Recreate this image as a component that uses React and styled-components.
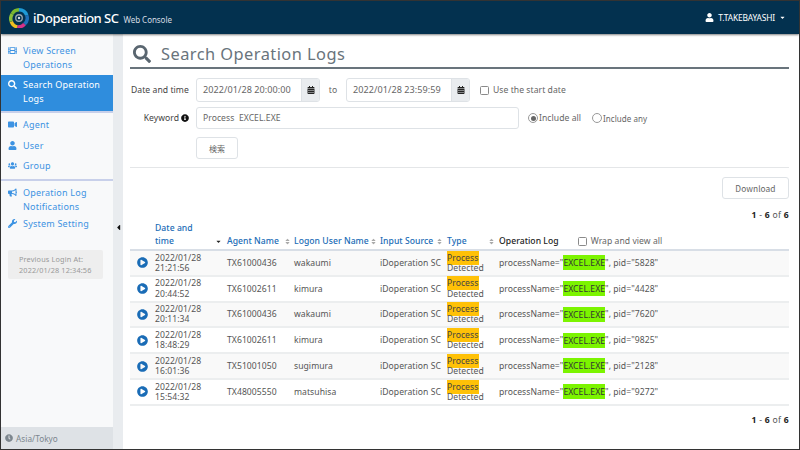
import React from "react";
import styled, { createGlobalStyle } from "styled-components";
import { FaFilm, FaSearch, FaVideo, FaUser, FaUsers, FaBullhorn, FaWrench, FaClock, FaCalendarAlt, FaInfoCircle, FaPlayCircle, FaCaretDown, FaCaretLeft, FaSort } from "react-icons/fa";

const Global = createGlobalStyle`
  html, body { margin: 0; padding: 0; background: #fff; }
  * { box-sizing: border-box; }
  body { font-family: "Noto Sans", "Noto Sans CJK JP", sans-serif; font-size: 8.6px; color: #555; letter-spacing: .05px; }
`;
const Frame = styled.div`
  width: 800px; height: 450px; border: 1px solid #333; display: flex; flex-direction: column; overflow: hidden;
`;
const Header = styled.header`
  height: 33px; flex: none; background: #03314f; color: #fff; display: flex; align-items: center; padding: 0 8px; box-shadow: 0 1px 2px rgba(0,0,0,.5); position: relative; z-index: 2;
`;
const Brand = styled.div`font-size: 13px; font-weight: 500; margin-left: 4px; letter-spacing: -.5px;`;
const Sub = styled.span`font-size: 8px; font-weight: 400; margin-left: 5px; color: #d5dde3; letter-spacing: -.05px;`;
const UserMenu = styled.div`margin-left: auto; margin-right: 5px; display: flex; align-items: center; gap: 4px; font-size: 8.4px; letter-spacing: -.15px; svg { display: block; }`;
const Body = styled.div`flex: 1; display: flex; min-height: 0;`;
const Side = styled.nav`width: 112px; flex: none; background: #f8f9fa; display: flex; flex-direction: column; padding-top: 10px;`;
const Item = styled.div`
  display: flex; gap: 6px; color: ${p => p.$active ? "#fff" : "#3d93e2"}; background: ${p => p.$active ? "#2f8ddd" : "transparent"};
  padding: ${p => p.$active ? "3px 0 5px 7px" : "0 0 0 7px"}; line-height: 13.7px; font-size: 9px; letter-spacing: .22px; white-space: nowrap; margin-bottom: ${p => p.$mb || 0}px;
  svg { flex: none; margin-top: 2px; width: 9px; height: 9px; }
`;
const Rule = styled.div`height: 2px; background: #c8d0ea; margin-bottom: ${p => p.$mb}px;`;
const LoginBox = styled.div`margin: 19px 10px 0 7px; background: #eeeeee; color: #999; border-radius: 2px; padding: 4px 0 0 11px; line-height: 10.5px; font-size: 7.3px; letter-spacing: .15px; height: 29px; white-space: nowrap;`;
const Zone = styled.div`margin-top: auto; height: 22px; background: #dee2e6; color: #7c868e; display: flex; align-items: center; gap: 3px; padding-left: 4px; font-size: 8.2px; svg { width: 8px; height: 8px; }`;
const Gutter = styled.div`width: 10px; flex: none; background: #e9ecef; display: flex; align-items: center; justify-content: center; padding-bottom: 28px; svg { width: 5px; height: 9px; color: #111; }`;
const Main = styled.main`flex: 1; padding: 0 10px 0 7px; min-width: 0; background: #fff;`;
const Title = styled.h1`
  margin: 9px 0 0; height: 26px; border-bottom: 2px solid #69747c; color: #69747c; font-size: 16.4px; font-weight: 400; line-height: 22px; display: flex; gap: 10px; padding-left: 3px; letter-spacing: .45px;
  svg { width: 18px; height: 18px; margin-top: 2px; color: #5a6670; }
`;
const FormRow = styled.div`display: flex; align-items: center; height: ${p => p.$h}px; margin-top: ${p => p.$mt}px;`;
const Label = styled.div`width: 66px; flex: none; padding-left: 1px; padding-right: ${p => p.$right ? 7 : 0}px; color: #444; display: flex; justify-content: ${p => p.$right ? "flex-end" : "flex-start"}; align-items: center; gap: 2px; svg { width: 8px; height: 8px; color: #111; }`;
const Group = styled.div`width: 124px; height: 24px; display: flex; border: 1px solid #dee2e6; border-radius: 3px; overflow: hidden;`;
const GroupText = styled.div`flex: 1; padding-left: 6px; line-height: 21px; color: #666; font-size: 9.1px;`;
const Addon = styled.div`width: 18px; background: #e9ecef; border-left: 1px solid #dee2e6; display: flex; align-items: center; justify-content: center; svg { width: 8px; height: 8px; color: #222; }`;
const To = styled.div`width: 26px; text-align: center; color: #666;`;
const Check = styled.span`width: 9px; height: 9px; border: 1px solid #8a8a8a; border-radius: 1.5px; display: inline-block; flex: none;`;
const CheckLabel = styled.div`display: flex; align-items: center; gap: 4px; margin-left: ${p => p.$ml}px; color: #666;`;
const TextInput = styled.div`width: 323px; height: 22px; border: 1px solid #dee2e6; border-radius: 3px; line-height: 20px; padding-left: 6px; color: #666; white-space: pre;`;
const Radio = styled.span`width: 10px; height: 10px; border: 1px solid #999; border-radius: 50%; display: flex; align-items: center; justify-content: center; flex: none; &::after { content: ""; width: 5px; height: 5px; border-radius: 50%; background: ${p => p.$on ? "#666" : "transparent"}; }`;
const RadioLabel = styled.div`display: flex; align-items: center; gap: 1px; margin-left: ${p => p.$ml}px; color: #666; font-size: ${p => p.$fs || 8.6}px;`;
const Btn = styled.div`height: 22px; width: ${p => p.$w}px; border: 1px solid #dee2e6; border-radius: 3px; display: flex; align-items: center; justify-content: center; color: #666; margin-left: ${p => p.$ml || 0}px; font-size: ${p => p.$fs || 8.4}px; font-family: "Noto Sans CJK JP", sans-serif;`;
const Hr = styled.div`height: 1px; background: #e4e6e8; margin-top: 8px;`;
const Tools = styled.div`display: flex; justify-content: flex-end; margin-top: 9px;`;
const Count = styled.div`text-align: right; margin-top: ${p => p.$mt}px; color: #555; font-size: 8.6px; line-height: 12px; letter-spacing: .3px; b { color: #222; font-weight: 700; }`;
const Table = styled.table`width: 659px; table-layout: fixed; border-collapse: collapse; margin-top: -2px;`;
const Th = styled.th`
  width: ${p => p.$w}px; height: 31px; padding: 0 0 1px; font-weight: 500; text-align: left; vertical-align: bottom; font-size: 8.6px; line-height: 13px; color: ${p => p.$dark ? "#222" : "#1a6cb6"}; border-bottom: 2px solid #d8dee6; white-space: nowrap;
`;
const ThInner = styled.div`display: flex; align-items: flex-end; justify-content: space-between; padding-right: ${p => p.$pr || 0}px; svg { width: 7px; height: 7px; margin: 0 0 3px; color: ${p => p.$sorted ? "#222" : "#aaa"}; flex: none; }`;
const Wrap = styled.span`display: inline-flex; align-items: center; gap: 4px; margin-left: 19px; font-weight: 400; color: #666; vertical-align: bottom;`;
const Tr = styled.tr`background: ${p => p.$odd ? "#f9f9f9" : "#fff"};`;
const Td = styled.td`height: 25.8px; padding: 0; border-bottom: 2px solid #eceeef; line-height: 10.2px; color: #555; vertical-align: middle; white-space: nowrap;`;
const Play = styled(FaPlayCircle)`width: 11px; height: 11px; color: #1a6cb6; display: block; margin: 0 0 0 7px;`;
const Amber = styled.mark`background: #ffc107; color: #444; padding: 1px 1px 1px 0;`;
const Lime = styled.mark`background: #7cf400; color: #333; padding: 1.5px 0;`;
const Logo = styled.svg`width: 20px; height: 20px; flex: none; display: block;`;

const rows = [
  ["21:21:56", "TX61000436", "wakaumi", "5828"],
  ["20:44:52", "TX61002611", "kimura", "4428"],
  ["20:11:34", "TX61000436", "wakaumi", "7620"],
  ["18:48:29", "TX61002611", "kimura", "9825"],
  ["16:01:36", "TX51001050", "sugimura", "2128"],
  ["15:54:32", "TX48005550", "matsuhisa", "9272"],
];

export default function App() {
  return (
    <>
      <Global />
      <Frame>
        <Header>
          <Logo viewBox="0 0 22 22" fill="none" strokeWidth="3.8">
            <path d="M3.5 6.5A9 9 0 0 1 11 2" stroke="#7ab82e" />
            <path d="M11 2a9 9 0 0 1 8.5 6" stroke="#1e9ad6" />
            <path d="M19.5 8a9 9 0 0 1 -2.5 9.7" stroke="#1e6fb8" />
            <path d="M17 17.7a9 9 0 0 1 -8 3.1" stroke="#d6328a" />
            <path d="M9 20.8a9 9 0 0 1 -6.5 -6" stroke="#f0c020" />
            <path d="M2.5 14.8a9 9 0 0 1 1 -8.3" stroke="#8ac03a" />
            <circle cx="11" cy="11" r="3.6" stroke="#9aa5ad" strokeWidth="1.5" />
            <circle cx="11" cy="11" r="1.3" fill="#dfe4e8" stroke="none" />
          </Logo>
          <Brand>iDoperation SC<Sub>Web Console</Sub></Brand>
          <UserMenu><FaUser size={9} />T.TAKEBAYASHI<FaCaretDown size={7} /></UserMenu>
        </Header>
        <Body>
          <Side>
            <Item $mb={4}><FaFilm />View Screen<br />Operations</Item>
            <Item $active><FaSearch /><span>Search Operation<br />Logs</span></Item>
            <Rule $mb={5} />
            <Item $mb={7}><FaVideo />Agent</Item>
            <Item $mb={7}><FaUser />User</Item>
            <Item $mb={6}><FaUsers />Group</Item>
            <Rule $mb={5} />
            <Item $mb={4}><FaBullhorn /><span>Operation Log<br />Notifications</span></Item>
            <Item><FaWrench />System Setting</Item>
            <LoginBox>Previous Login At:<br />2022/01/28 12:34:56</LoginBox>
            <Zone><FaClock />Asia/Tokyo</Zone>
          </Side>
          <Gutter><FaCaretLeft /></Gutter>
          <Main>
            <Title><FaSearch />Search Operation Logs</Title>
            <FormRow $h={24} $mt={9}>
              <Label>Date and time</Label>
              <Group><GroupText>2022/01/28 20:00:00</GroupText><Addon><FaCalendarAlt /></Addon></Group>
              <To>to</To>
              <Group><GroupText>2022/01/28 23:59:59</GroupText><Addon><FaCalendarAlt /></Addon></Group>
              <CheckLabel $ml={10}><Check />Use the start date</CheckLabel>
            </FormRow>
            <FormRow $h={22} $mt={5}>
              <Label $right>Keyword<FaInfoCircle /></Label>
              <TextInput>Process  EXCEL.EXE</TextInput>
              <RadioLabel $ml={9}><Radio $on />Include all</RadioLabel>
              <RadioLabel $ml={11} $fs={8}><Radio />Include any</RadioLabel>
            </FormRow>
            <FormRow $h={22} $mt={8}>
              <Btn $w={42} $ml={66} $fs={8}>検索</Btn>
            </FormRow>
            <Hr />
            <Tools><Btn $w={67}>Download</Btn></Tools>
            <Count $mt={10}><b>1</b> - <b>6</b> of <b>6</b></Count>
            <Table>
              <thead>
                <tr>
                  <Th $w={25} />
                  <Th $w={72}><ThInner $sorted $pr={5}><span>Date and<br />time</span><FaCaretDown /></ThInner></Th>
                  <Th $w={67}><ThInner $pr={3}><span>Agent Name</span><FaSort /></ThInner></Th>
                  <Th $w={86}><ThInner $pr={3}><span>Logon User Name</span><FaSort /></ThInner></Th>
                  <Th $w={67}><ThInner $pr={4}><span>Input Source</span><FaSort /></ThInner></Th>
                  <Th $w={52}><ThInner $pr={4}><span>Type</span><FaSort /></ThInner></Th>
                  <Th $w={290} $dark>Operation Log<Wrap><Check />Wrap and view all</Wrap></Th>
                </tr>
              </thead>
              <tbody>
                {rows.map((r, i) => (
                  <Tr key={i} $odd={i % 2 === 0}>
                    <Td><Play /></Td>
                    <Td>2022/01/28<br />{r[0]}</Td>
                    <Td>{r[1]}</Td>
                    <Td>{r[2]}</Td>
                    <Td>iDoperation SC</Td>
                    <Td><Amber>Process</Amber><br />Detected</Td>
                    <Td>processName="<Lime>EXCEL.EXE</Lime>", pid="{r[3]}"</Td>
                  </Tr>
                ))}
              </tbody>
            </Table>
            <Count $mt={8}><b>1</b> - <b>6</b> of <b>6</b></Count>
          </Main>
        </Body>
      </Frame>
    </>
  );
}
